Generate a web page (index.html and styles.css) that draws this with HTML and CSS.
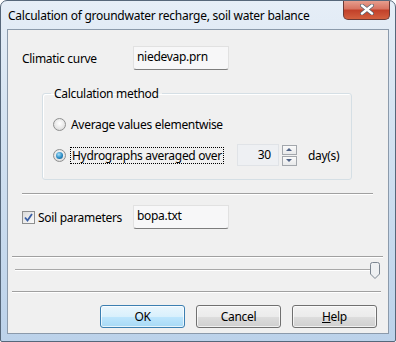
FILE: index.html
```html
<!DOCTYPE html>
<html lang="en">
<head>
  <meta charset="UTF-8" />
  <title>Calculation of groundwater recharge, soil water balance</title>
  <link rel="stylesheet" href="styles.css">
</head>
<body>

  <div class="window">
    <div class="titlebar">
      <span class="title">Calculation of groundwater recharge, soil water balance</span>
      <button class="close-button">
        <svg width="16" height="11" viewBox="0 0 16 11">
          <path d="M3 1.5 L13 9.5 M13 1.5 L3 9.5" stroke="#50606f" stroke-width="3.8" stroke-linecap="round"/>
          <path d="M3 1.5 L13 9.5 M13 1.5 L3 9.5" stroke="#fff" stroke-width="2.4" stroke-linecap="round"/>
        </svg>
      </button>
    </div>

    <div class="client">
      <div class="row climatic-row">
        <span class="label">Climatic curve</span>
        <div class="textbox">niedevap.prn</div>
      </div>

      <fieldset class="groupbox">
        <legend>Calculation method</legend>
        <div class="radio-row">
          <span class="radio"></span>
          <span>Average values elementwise</span>
        </div>
        <div class="radio-row">
          <span class="radio checked"></span>
          <span class="focus-text">Hydrographs averaged over</span>
          <div class="number-box">30</div>
          <div class="spinner">
            <span class="spin-btn"><span class="arrow-up"></span></span>
            <span class="spin-btn"><span class="arrow-down"></span></span>
          </div>
          <span class="unit">day(s)</span>
        </div>
      </fieldset>

      <div class="separator sep-first"></div>

      <div class="row soil-row">
        <label class="check-label">
          <span class="checkbox">
            <svg width="9" height="9" viewBox="0 0 9 9">
              <path d="M1 4.5 L3.5 7.5 L8 1" fill="none" stroke="#3a5fa6" stroke-width="1.8"/>
            </svg>
          </span>
          Soil parameters
        </label>
        <div class="textbox">bopa.txt</div>
      </div>

      <div class="separator sep-wide"></div>

      <div class="slider">
        <div class="track"></div>
        <svg class="thumb" width="10" height="17" viewBox="0 0 10 17">
          <path d="M0.5 2.5 Q0.5 0.5 2.5 0.5 L7.5 0.5 Q9.5 0.5 9.5 2.5 L9.5 12 L5 16.5 L0.5 12 Z" fill="#eef0f2" stroke="#7b8590"/>
        </svg>
      </div>

      <div class="separator sep-bottom"></div>

      <div class="buttons">
        <button class="btn default">OK</button>
        <button class="btn">Cancel</button>
        <button class="btn"><u>H</u>elp</button>
      </div>
    </div>
  </div>

</body>
</html>
```

FILE: styles.css
```css
body {
  margin: 0;
  font-family: "Noto Sans", sans-serif;
  font-size: 12px;
  letter-spacing: -0.3px;
  color: #000;
  background: #fff;
}

.window {
  width: 394px;
  height: 340px;
  border: 1px solid #56677a;
  border-radius: 7px 7px 2px 2px;
  background: linear-gradient(to bottom, #e6eef7 0%, #d6e4f2 30%, #bcd2ea 100%);
  display: flex;
  flex-direction: column;
  overflow: hidden;
}

.titlebar {
  height: 28px;
  display: flex;
  justify-content: space-between;
  align-items: flex-start;
}

.title {
  margin: 6px 0 0 7px;
  letter-spacing: -0.25px;
}

.close-button {
  width: 47px;
  height: 20px;
  margin-right: 5px;
  margin-top: -1px;
  border: 1px solid #6b3a36;
  border-top: none;
  border-radius: 0 0 5px 5px;
  background: linear-gradient(to bottom, #e8a393 0%, #d87563 45%, #c2412a 55%, #d3603f 100%);
  display: flex;
  align-items: center;
  justify-content: center;
  padding: 0;
}

.client {
  margin: 0 6px 7px 6px;
  flex: 1;
  border: 1px solid #8b9aab;
  background: #f0f0f0;
  display: flex;
  flex-direction: column;
}

.row {
  display: flex;
  align-items: center;
}

.label {
  width: 111px;
  padding-left: 14px;
}

.textbox {
  width: 96px;
  height: 24px;
  padding: 1px 0 0 3px;
  box-sizing: border-box;
  background: #f7f7f8;
  border: 1px solid #e1e1e1;
  border-bottom: 1px solid #7d7d7d;
  border-radius: 0 0 3px 3px;
  line-height: 17px;
}

.climatic-row {
  margin-top: 15px;
  height: 26px;
}

.groupbox {
  margin: 14px 0 0 34px;
  width: 310px;
  height: 95px;
  box-sizing: border-box;
  border: 1px solid #d5dfe5;
  border-radius: 3px;
  box-shadow: inset 1px 1px 0 #fff;
  padding: 11px 0 0 10px;
}

.groupbox legend {
  padding: 0 3px;
  margin-left: -2px;
}

.radio-row {
  display: flex;
  align-items: center;
  height: 22px;
  margin-bottom: 9px;
}

.radio {
  width: 11px;
  height: 11px;
  border: 1px solid #8e8f8f;
  border-radius: 50%;
  background: radial-gradient(circle at 50% 40%, #fff 0%, #e6e6e6 60%, #cfcfcf 100%);
  margin-right: 5px;
  position: relative;
}

.radio.checked::after {
  content: "";
  position: absolute;
  left: 2px;
  top: 2px;
  width: 7px;
  height: 7px;
  border-radius: 50%;
  background: radial-gradient(circle at 40% 35%, #a8e0f8 0%, #2a8bc4 55%, #0d4f7e 100%);
}

.focus-text {
  outline: 1px dotted #000;
  outline-offset: 0;
  padding: 0 1px;
  line-height: 15px;
}

.number-box {
  width: 42px;
  height: 22px;
  box-sizing: border-box;
  margin-left: 14px;
  background: #eef0f3;
  border: 1px solid #e0e3e7;
  text-align: right;
  padding-right: 7px;
  line-height: 19px;
}

.spinner {
  display: flex;
  flex-direction: column;
  gap: 1px;
  margin-left: 3px;
}

.spin-btn {
  width: 15px;
  height: 10px;
  box-sizing: border-box;
  border: 1px solid #a3a7ac;
  background: linear-gradient(to bottom, #fafafa, #e8e9ea);
  display: flex;
  align-items: center;
  justify-content: center;
}

.arrow-up, .arrow-down {
  width: 0;
  height: 0;
  border-left: 3px solid transparent;
  border-right: 3px solid transparent;
}

.arrow-up { border-bottom: 3px solid #4d6185; }
.arrow-down { border-top: 3px solid #4d6185; }

.unit {
  margin-left: 11px;
}

.separator {
  height: 0;
  border-top: 1px solid #a0a0a0;
  border-bottom: 1px solid #fff;
}

.sep-first {
  margin: 13px 15px 0 14px;
}

.soil-row {
  margin-top: 10px;
  height: 24px;
}

.check-label {
  width: 111px;
  padding-left: 14px;
  display: flex;
  align-items: center;
  gap: 3px;
}

.checkbox {
  width: 11px;
  height: 11px;
  border: 1px solid #8e8f8f;
  background: linear-gradient(135deg, #dcdcdc, #fafafa);
  display: flex;
  align-items: center;
  justify-content: center;
}

.sep-wide {
  margin: 27px 5px 0 4px;
}

.slider {
  position: relative;
  height: 17px;
  margin: 4px 0 0 0;
}

.track {
  position: absolute;
  left: 7px;
  right: 10px;
  top: 7px;
  border-top: 1px solid #a8a8a8;
  border-bottom: 1px solid #fff;
}

.thumb {
  position: absolute;
  left: 362px;
  top: 0;
}

.sep-bottom {
  margin: 12px 7px 0 4px;
}

.buttons {
  display: flex;
  justify-content: flex-end;
  gap: 11px;
  margin: 12px 11px 0 0;
}

.btn {
  width: 85px;
  height: 23px;
  font-family: "Noto Sans", sans-serif;
  font-size: 12px;
  letter-spacing: -0.3px;
  color: #000;
  border: 1px solid #707070;
  border-radius: 3px;
  background: linear-gradient(to bottom, #f2f2f2 0%, #ebebeb 50%, #dddddd 51%, #cfcfcf 100%);
  box-shadow: inset 0 0 0 1px rgba(255,255,255,0.7);
  padding: 0;
}

.btn.default {
  border-color: #3c7fb1;
  background: linear-gradient(to bottom, #eaf6fd 0%, #d9f0fc 50%, #bee6fd 51%, #a7d9f5 100%);
}
```
